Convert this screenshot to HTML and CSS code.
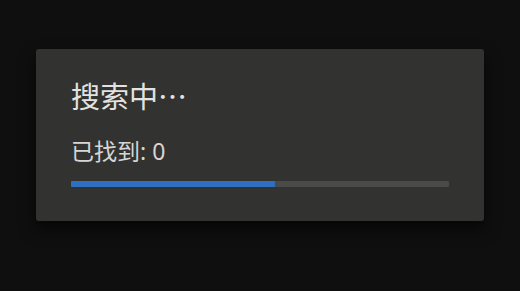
FILE: index.html
```html
<!DOCTYPE html>
<html lang="zh-CN">
<head>
    <meta charset="UTF-8">
    <title>搜索中</title>
    <link rel="stylesheet" href="styles.css">
</head>
<body>

<div class="dialog">
    <h2 class="dialog-title">搜索中…</h2>
    <p class="found">已找到: <span id="count">0</span></p>
    <div class="progress">
        <div class="progress-fill" style="width: 54%"></div>
    </div>
</div>

</body>
</html>
```

FILE: styles.css
```css
body {
    margin: 0;
    height: 291px;
    background-color: #0e0f0e;
    font-family: "Noto Sans CJK SC", "Noto Sans", sans-serif;
    display: flex;
    justify-content: center;
    padding-top: 49px;
    box-sizing: border-box;
}
.dialog {
    width: 448px;
    height: 172px;
    box-sizing: border-box;
    padding: 28px 35px 0 35px;
    background-color: #323331;
    border-radius: 3px;
    box-shadow: 0 8px 16px rgba(0, 0, 0, 0.6);
}
.dialog-title {
    margin: 0;
    font-size: 29px;
    font-weight: normal;
    color: #e2e2e0;
    line-height: 36px;
}
.found {
    margin: 24px 0 0 0;
    font-family: "Noto Sans", "Noto Sans CJK SC", sans-serif;
    font-size: 23px;
    color: #d6d6d4;
    line-height: 28px;
}
.progress {
    margin-top: 16px;
    height: 6px;
    background-color: #4a4b49;
    border-radius: 1px;
}
.progress-fill {
    height: 100%;
    background-color: #2f6fc1;
    border-radius: 1px;
}
```
